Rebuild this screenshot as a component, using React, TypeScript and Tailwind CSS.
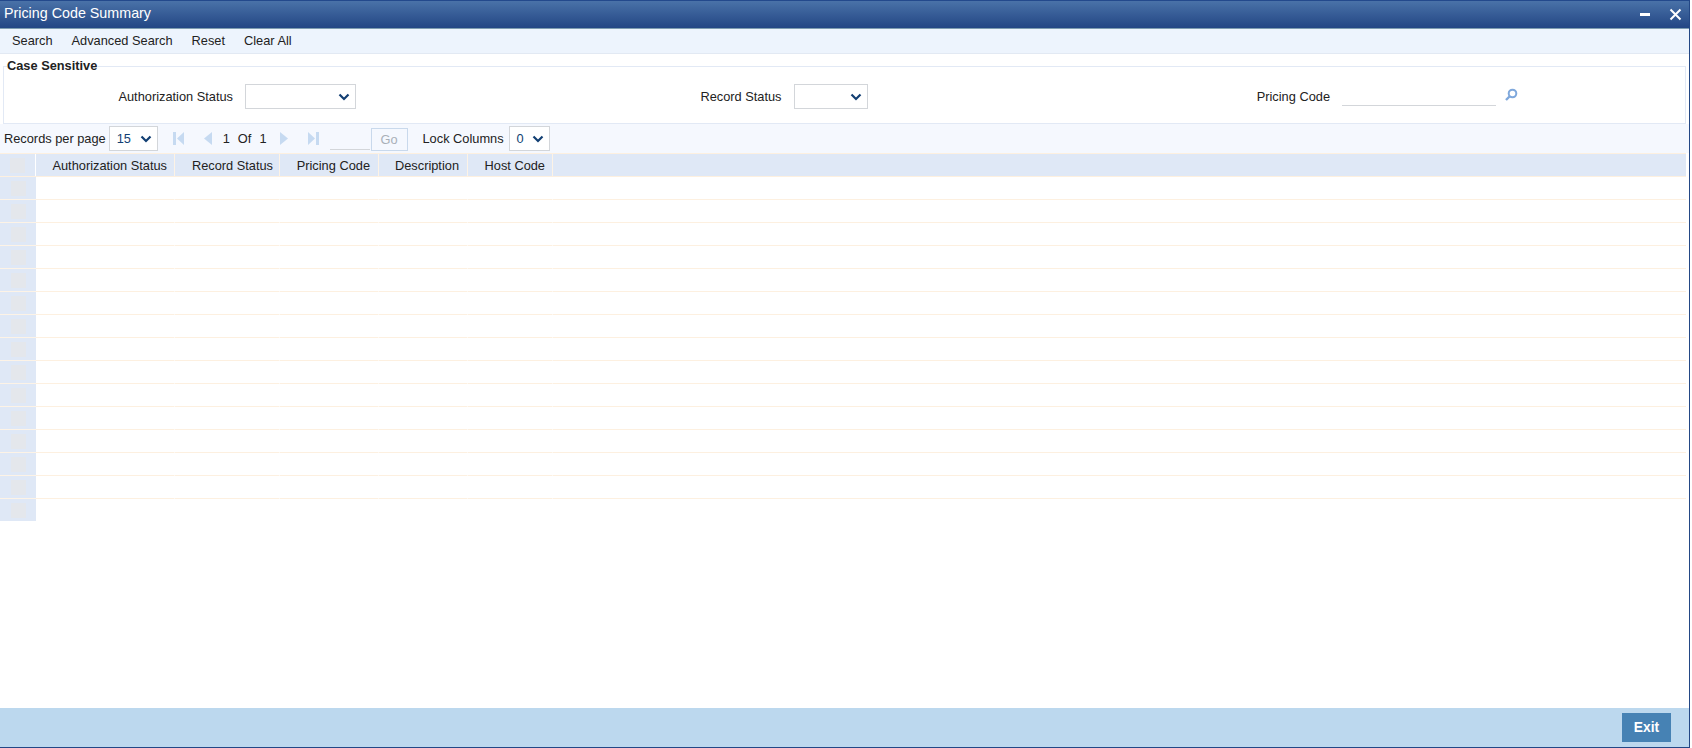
const rows = Array.from({ length: 15 }, (_, i) => i);
const cols = [
  { label: "Authorization Status", w: "w-[139px]", pr: "pr-[7px]" },
  { label: "Record Status", w: "w-[105px]", pr: "pr-[6px]" },
  { label: "Pricing Code", w: "w-[99px]", pr: "pr-[8px]" },
  { label: "Description", w: "w-[89px]", pr: "pr-[8px]" },
  { label: "Host Code", w: "w-[85px]", pr: "pr-[7px]" },
];

function Chevron() {
  return (
    <svg width="12" height="8" viewBox="0 0 12 8" className="shrink-0">
      <path d="M1.5 1.5 L6 6 L10.5 1.5" fill="none" stroke="#123f73" strokeWidth="2.2" />
    </svg>
  );
}

function Select({ w, value }: { w: string; value?: string }) {
  return (
    <div className={`${w} flex items-center justify-between border border-[#d3d6da] bg-white pl-[7px] pr-[5px] text-[#123f73]`}>
      <span>{value}</span>
      <Chevron />
    </div>
  );
}

function PageIcon({ kind }: { kind: "first" | "prev" | "next" | "last" }) {
  const d = {
    first: "M0 0H3V13H0Z M11 0V13L4 6.5Z",
    prev: "M10 0V13L2 6.5Z",
    next: "M1 0V13L9 6.5Z",
    last: "M0 0V13L7 6.5Z M8 0H11V13H8Z",
  }[kind];
  return (
    <svg width="11" height="13" viewBox="0 0 11 13" className="shrink-0">
      <path d={d} fill="#c6daf1" />
    </svg>
  );
}

export default function App() {
  return (
    <div className="h-[748px] w-[1692px] overflow-hidden bg-white font-['Liberation_Sans',Arial,sans-serif] text-[12.8px] text-[#222]">
      <div className="flex h-[748px] w-[1690px] flex-col border-r border-b border-[#234785]">
        <div className="flex h-[29px] shrink-0 items-center justify-between border-t border-b border-t-[#23498c] border-b-[#7d9cb0] bg-gradient-to-b from-[#4a72a8] to-[#234684] pl-[4px] pr-[7px] text-white">
          <span className="pb-[3px] text-[14.3px] leading-none">Pricing Code Summary</span>
          <div className="flex items-center gap-[17px]">
            <svg width="12" height="12" viewBox="0 0 12 12" className="mt-[-2px] ml-[-1px]"><rect x="0" y="5" width="10" height="3" fill="#fff" /></svg>
            <svg width="13" height="13" viewBox="0 0 13 13"><path d="M1.5 1.5L11.5 11.5M11.5 1.5L1.5 11.5" stroke="#fff" strokeWidth="2" /></svg>
          </div>
        </div>

        <div className="flex h-[25px] shrink-0 items-center gap-[19px] border-b border-[#e2e9f3] bg-[#edf4fd] pl-[12px]">
          <span>Search</span>
          <span>Advanced Search</span>
          <span>Reset</span>
          <span>Clear All</span>
        </div>

        <div className="h-[70px] shrink-0 px-[3px] pt-[5px]">
          <fieldset className="h-[65px] w-[1683px] border border-[#e2e9f5]">
            <legend className="ml-[3px] pr-[1px] text-[12.8px] font-bold leading-[14px]">Case Sensitive</legend>
            <div className="mt-[11px] grid grid-cols-[repeat(3,548.5px)]">
              <div className="flex h-[25px] items-center">
                <label className="mr-[12px] w-[229px] text-right">Authorization Status</label>
                <Select w="w-[111px] h-[25px]" />
              </div>
              <div className="flex h-[25px] items-center">
                <label className="mr-[12px] w-[229px] text-right">Record Status</label>
                <Select w="w-[74px] h-[25px]" />
              </div>
              <div className="flex h-[25px] items-center">
                <label className="mr-[12px] w-[229px] text-right">Pricing Code</label>
                <div className="mt-[-3px] h-[22px] w-[154px] border-b border-[#d3d6da]" />
                <svg width="14" height="14" viewBox="0 0 14 14" className="ml-[8px] mt-[-3px]">
                  <circle cx="8.5" cy="5.5" r="3.8" fill="none" stroke="#7fa8dc" strokeWidth="2" />
                  <path d="M5.5 8.5L2 12" stroke="#7fa8dc" strokeWidth="2.4" />
                </svg>
              </div>
            </div>
          </fieldset>
        </div>

        <div className="flex h-[29px] shrink-0 items-center bg-[#f5f8fe] pl-[4px]">
          <span>Records per page</span>
          <Select w="ml-[3px] w-[49px] h-[25px]" value="15" />
          <div className="ml-[15px]"><PageIcon kind="first" /></div>
          <div className="ml-[18px]"><PageIcon kind="prev" /></div>
          <span className="ml-[10px]">1</span>
          <span className="ml-[8px]">Of</span>
          <span className="ml-[8px]">1</span>
          <div className="ml-[12px]"><PageIcon kind="next" /></div>
          <div className="ml-[18px]"><PageIcon kind="last" /></div>
          <div className="ml-[11px] mt-[2px] h-[20px] w-[40px] border-b border-[#d3d6da]" />
          <div className="ml-[1px] mt-[2px] flex h-[23px] w-[37px] items-center justify-center border border-[#c9d9ec] text-[#a9b0b8]">Go</div>
          <span className="ml-[15px]">Lock Columns</span>
          <Select w="ml-[5px] w-[41px] h-[25px]" value="0" />
        </div>

        <div className="flex h-[24px] w-[1686px] shrink-0 border-y border-[#fdf0e0] bg-[#dfe8f6]">
          <div className="flex w-[36px] shrink-0 items-center justify-center border-r border-white">
            <div className="h-[15px] w-[15px] bg-[#e4e7ec]" />
          </div>
          {cols.map((c) => (
            <div key={c.label} className={`${c.w} ${c.pr} shrink-0 border-r border-[#fdf3e6] text-right leading-[24px]`}>
              {c.label}
            </div>
          ))}
        </div>

        {rows.map((r) => (
          <div key={r} className={`flex w-[1686px] shrink-0 ${r < 14 ? "h-[23px]" : "h-[22px]"}`}>
            <div className={`flex w-[36px] shrink-0 items-center justify-center bg-[#dfe8f6] ${r < 14 ? "border-b border-b-[#fdf3e6]" : ""}`}>
              <div className="h-[15px] w-[15px] bg-[#e4e7ec]" />
            </div>
            {cols.map((c) => (
              <div key={c.label} className={`${c.w} shrink-0 border-r border-white ${r < 14 ? "border-b border-b-[#fdf0e0]" : ""}`} />
            ))}
            <div className={`flex-1 ${r < 14 ? "border-b border-[#fdf0e0]" : ""}`} />
          </div>
        ))}

        <div className="flex-1" />

        <div className="flex h-[39px] shrink-0 items-center justify-end bg-[#bcd8ee] pr-[18px]">
          <div className="flex h-[29px] w-[49px] items-center justify-center bg-[#4682b4] pt-[2px] text-[13.8px] font-bold text-white">Exit</div>
        </div>
      </div>
    </div>
  );
}
